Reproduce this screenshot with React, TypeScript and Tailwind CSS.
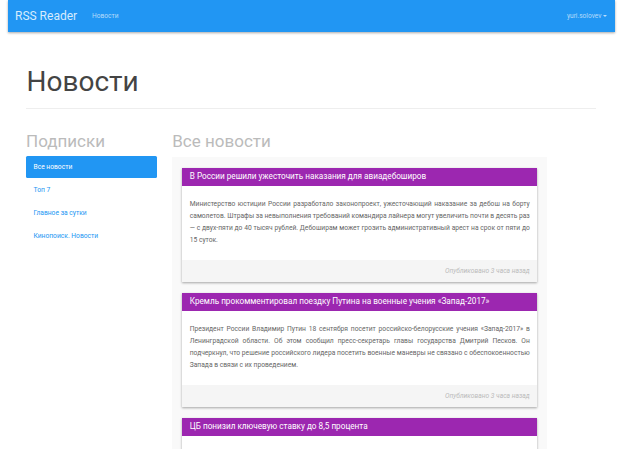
import React from "react";

const cards = [
  {
    title: "В России решили ужесточить наказания для авиадебоширов",
    body: "Министерство юстиции России разработало законопроект, ужесточающий наказание за дебош на борту самолетов. Штрафы за невыполнения требований командира лайнера могут увеличить почти в десять раз — с двух-пяти до 40 тысяч рублей. Дебоширам может грозить административный арест на срок от пяти до 15 суток.",
  },
  {
    title: "Кремль прокомментировал поездку Путина на военные учения «Запад-2017»",
    body: "Президент России Владимир Путин 18 сентября посетит российско-белорусские учения «Запад-2017» в Ленинградской области. Об этом сообщил пресс-секретарь главы государства Дмитрий Песков. Он подчеркнул, что решение российского лидера посетить военные маневры не связано с обеспокоенностью Запада в связи с их проведением.",
  },
  {
    title: "ЦБ понизил ключевую ставку до 8,5 процента",
    body: "Банк России снизил ключевую ставку на 50 базисных пунктов, до 8,5 процента годовых. Решение было принято на заседании совета директоров регулятора.",
  },
];

const subs = ["Все новости", "Топ 7", "Главное за сутки", "Кинопоиск. Новости"];

export default function App() {
  return (
    <div className="bg-white font-['Roboto',sans-serif] text-[#666] overflow-hidden h-[449px]">
      <nav className="mx-[7.5px] h-[32px] bg-[#2196f3] flex items-center justify-between shadow-[0_1px_3px_rgba(0,0,0,0.12),0_1px_2px_rgba(0,0,0,0.24)]">
        <div className="flex items-center">
          <span className="px-[7.5px] text-[12px] leading-[32px] text-[#d6ebfd]">RSS Reader</span>
          <span className="px-[7.5px] text-[6.6px] leading-[32px] text-[#b6dcfb]">Новости</span>
        </div>
        <div className="px-[7.5px] flex items-center text-[6.6px] leading-[32px] text-[#b6dcfb]">
          <span>yuri.solovev</span>
          <span className="ml-[1.5px] w-0 h-0 border-l-[2px] border-r-[2px] border-t-[2px] border-l-transparent border-r-transparent border-t-[#b6dcfb]" />
        </div>
      </nav>

      <div className="ml-[26px] w-[570px]">
        <div className="mt-[35px] pb-[10px] border-b border-[#eee]">
          <h1 className="text-[28px] leading-[1.1] text-[#444] ml-[0.5px]">Новости</h1>
        </div>

        <div className="flex mt-[23.5px]">
          <div className="w-[131.25px] shrink-0">
            <h3 className="text-[17px] leading-[1.1] text-[#bbb]">Подписки</h3>
            <ul className="mt-[5px] flex flex-col gap-[1px]">
              {subs.map((s, i) => (
                <li
                  key={s}
                  className={
                    i === 0
                      ? "h-[22px] px-[7.5px] rounded-[1.5px] bg-[#2196f3] text-white text-[6.7px] leading-[22px]"
                      : "h-[22px] px-[7.5px] text-[#2196f3] text-[6.7px] leading-[22px]"
                  }
                >
                  {s}
                </li>
              ))}
            </ul>
          </div>

          <div className="ml-[15px] w-[375px] shrink-0">
            <h3 className="text-[17px] leading-[1.1] text-[#bbb]">Все новости</h3>
            <div className="mt-[6px] bg-[#f9f9f9] px-[10px] pt-[11px] pb-[10px]">
              {cards.map((c) => (
                <div
                  key={c.title}
                  className="mb-[11px] bg-white shadow-[0_1px_3px_rgba(0,0,0,0.12),0_1px_2px_rgba(0,0,0,0.24)]"
                >
                  <div className="bg-[#9c27b0] h-[18px] px-[7.5px] flex items-center">
                    <h4 className="text-[8.2px] leading-[1.1] text-white">{c.title}</h4>
                  </div>
                  <div className="px-[7.5px] pt-[12px] pb-[14px]">
                    <p className="text-[6.7px] leading-[12px] text-justify text-[#666]">{c.body}</p>
                  </div>
                  <div className="bg-[#f5f5f5] h-[22px] px-[7.5px] flex items-center justify-end">
                    <span className="text-[6.7px] italic text-[#bbb]">Опубликовано 3 часа назад</span>
                  </div>
                </div>
              ))}
            </div>
          </div>
        </div>
      </div>
    </div>
  );
}
